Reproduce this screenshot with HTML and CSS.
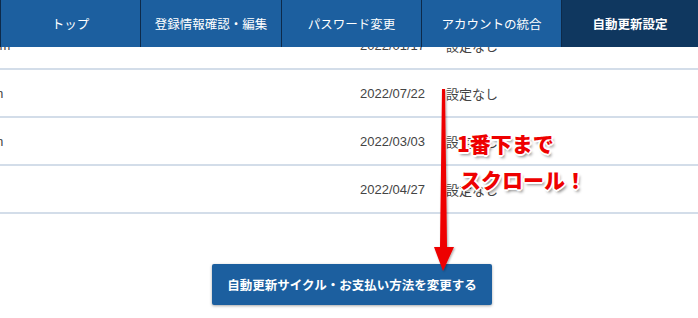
FILE: index.html
```html
<!DOCTYPE html>
<html lang="ja">
  <head>
    <meta charset="UTF-8" />
    <title>自動更新設定</title>
    <link rel="stylesheet" href="styles.css">
  </head>
  <body>
    <nav class="tabs">
      <a class="tab">トップ</a>
      <a class="tab">登録情報確認・編集</a>
      <a class="tab">パスワード変更</a>
      <a class="tab">アカウントの統合</a>
      <a class="tab active">自動更新設定</a>
    </nav>

    <div class="list">
      <div class="row">
        <div class="cell mail"><span class="shift1">sample.user@example.com</span></div>
        <div class="cell date">2022/01/17</div>
        <div class="cell state">設定なし</div>
      </div>
      <div class="row">
        <div class="cell mail"><span class="shift2">sample.user@example.com</span></div>
        <div class="cell date">2022/07/22</div>
        <div class="cell state">設定なし</div>
      </div>
      <div class="row">
        <div class="cell mail"><span class="shift2">sample.user@example.com</span></div>
        <div class="cell date">2022/03/03</div>
        <div class="cell state">設定なし</div>
      </div>
      <div class="row">
        <div class="cell mail"></div>
        <div class="cell date">2022/04/27</div>
        <div class="cell state">設定なし</div>
      </div>
    </div>

    <div class="actions">
      <button class="change">自動更新サイクル・お支払い方法を変更する</button>
    </div>

    <!-- annotation drawn over the screenshot -->
    <svg class="arrow" width="40" height="190" viewBox="0 0 40 190">
      <defs>
        <filter id="sh" x="-50%" y="-10%" width="200%" height="120%">
          <feDropShadow dx="1" dy="1" stdDeviation="1.2" flood-color="#000" flood-opacity="0.35" />
        </filter>
      </defs>
      <g filter="url(#sh)">
        <polygon points="20,0 23,0 25,158 32,158 21,182 12,158 18,158" fill="#ee0000" />
      </g>
    </svg>
    <div class="note">
      <p>1番下まで</p>
      <p>スクロール！</p>
    </div>
  </body>
</html>
```

FILE: styles.css
```css
html {
  font-family: "Liberation Sans", "Noto Sans CJK JP", sans-serif;
}
body {
  margin: 0;
  width: 698px;
  height: 318px;
  overflow: hidden;
  position: relative;
  background: #fff;
}
.tabs {
  position: absolute;
  top: 0;
  left: 0;
  right: 0;
  height: 47px;
  display: grid;
  grid-template-columns: 0px 140px 141px 140px 140px 1fr;
  background: #1c5f9f;
  border-left: 1px solid #0d2a4a;
  z-index: 2;
}
.tabs::before {
  content: "";
}
.tab {
  display: flex;
  align-items: center;
  justify-content: center;
  color: #fff;
  font-family: "Noto Sans CJK JP", sans-serif;
  font-size: 12.5px;
  border-right: 1px solid #0d2a4a;
}
.tab.active {
  background: #0f375f;
  font-weight: bold;
  border-right: none;
}
.list {
  padding-top: 22px;
}
.row {
  display: grid;
  grid-template-columns: 345px 86px 1fr;
  height: 46px;
  border-bottom: 2px solid #d3dde9;
  align-items: center;
  color: #444;
  font-size: 13px;
}
.cell {
  overflow: hidden;
  white-space: nowrap;
}
.mail span {
  display: inline-block;
}
.shift1 {
  margin-left: -151px;
}
.shift2 {
  margin-left: -158px;
}
.date {
  padding-left: 15px;
}
.state {
  padding-left: 15px;
  font-family: "Noto Sans CJK JP", sans-serif;
}
.actions {
  display: flex;
  justify-content: center;
  padding-top: 50px;
  padding-left: 6px;
}
.change {
  width: 280px;
  height: 41px;
  border: none;
  border-radius: 2px;
  background: #1c5f9f;
  color: #fff;
  font-family: "Noto Sans CJK JP", sans-serif;
  font-size: 12.5px;
  font-weight: bold;
  box-shadow: 0 1px 3px rgba(0, 0, 0, 0.35);
}
.arrow {
  position: absolute;
  left: 422px;
  top: 89px;
}
.note {
  position: absolute;
  left: 457px;
  top: 131px;
  color: #ee0000;
  font-family: "Noto Sans CJK JP", sans-serif;
  font-weight: 900;
  font-size: 21px;
  text-shadow: -1px -1px 0 #fff, 1px -1px 0 #fff, -1px 1px 0 #fff, 1px 1px 0 #fff,
    0 -2px 0 #fff, 0 2px 0 #fff, -2px 0 0 #fff, 2px 0 0 #fff,
    2px 3px 3px rgba(0, 0, 0, 0.45);
}
.note p {
  margin: 0;
  line-height: 25px;
}
.note p + p {
  margin-top: 11px;
  margin-left: 3px;
}
```
